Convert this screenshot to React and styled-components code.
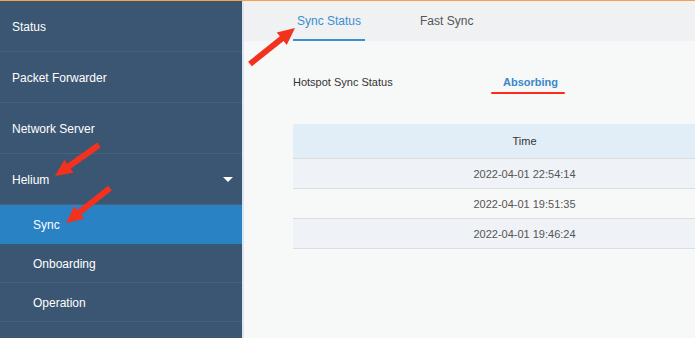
import React from "react";
import styled, { createGlobalStyle } from "styled-components";

const GlobalStyle = createGlobalStyle`
  html, body { margin: 0; padding: 0; }
  body {
    font-family: "Liberation Sans", Arial, sans-serif;
    overflow: hidden;
    background: #f7f8f8;
  }
`;

const Page = styled.div`
  position: relative;
  display: flex;
  width: 695px;
  height: 338px;
  border-top: 1px solid #f4a14c;
  box-sizing: border-box;
  overflow: hidden;
`;

const Sidebar = styled.nav`
  flex: 0 0 242px;
  background: #3b5672;
  border-right: 2px solid #dde6ee;
  display: flex;
  flex-direction: column;
`;

const NavItem = styled.div`
  height: 50px;
  border-bottom: 1px solid #47627f;
  display: flex;
  align-items: center;
  justify-content: space-between;
  padding: 1px 9px 0 12px;
  box-sizing: border-box;
  height: 51px;
  color: #ffffff;
  font-size: 12px;
`;

const SubItem = styled.div`
  height: 39px;
  box-sizing: border-box;
  border-bottom: 1px solid ${(p) => (p.$active ? "#2982c4" : "#47627f")};
  display: flex;
  align-items: center;
  padding: 1px 0 0 33px;
  color: #ffffff;
  font-size: 12px;
  background: ${(p) => (p.$active ? "#2982c4" : "transparent")};
`;

const Caret = styled.span`
  width: 0;
  height: 0;
  border-left: 5px solid transparent;
  border-right: 5px solid transparent;
  border-top: 5px solid #ffffff;
`;

const Main = styled.main`
  flex: 1;
  min-width: 0;
  background: #f7f8f8;
  overflow: hidden;
`;

const TabBar = styled.div`
  height: 40px;
  background: #f0f1f3;
  display: flex;
  padding-left: 49px;
  gap: 51px;
`;

const Tab = styled.div`
  display: flex;
  align-items: center;
  padding: 2px 4px 0;
  font-size: 12px;
  color: ${(p) => (p.$active ? "#3a8fd2" : "#555555")};
  border-bottom: 2px solid ${(p) => (p.$active ? "#3a8fd2" : "transparent")};
`;

const Content = styled.section`
  padding-left: 49px;
`;

const StatusRow = styled.div`
  margin-top: 31px;
  display: grid;
  grid-template-columns: 210px auto;
  line-height: 20px;
  font-size: 11px;
`;

const Label = styled.span`
  color: #333333;
`;

const Value = styled.span`
  justify-self: start;
  position: relative;
  font-weight: bold;
  color: #3a87c8;
  &::after {
    content: "";
    position: absolute;
    left: -12px;
    right: -7px;
    bottom: -2px;
    height: 2px;
    background: #ff2a1a;
    border-radius: 1px;
  }
`;

const Table = styled.table`
  margin-top: 32px;
  width: 926px;
  border-collapse: collapse;
  font-size: 11px;
`;

const HeadCell = styled.th`
  height: 34px;
  padding: 0;
  background: #e1eef8;
  border-bottom: 1px solid #dcdcdc;
  color: #333333;
  font-weight: normal;
  text-align: center;
  width: ${(p) => p.$w || "auto"};
  border-top-left-radius: ${(p) => (p.$first ? "3px" : "0")};
`;

const Row = styled.tr`
  background: ${(p) => (p.$odd ? "#eff2f6" : "#f7f8f8")};
`;

const Cell = styled.td`
  height: 29px;
  padding: 0;
  border-bottom: 1px solid #dddddd;
  color: #555555;
  text-align: center;
`;

const Overlay = styled.svg`
  position: absolute;
  left: 0;
  top: -1px;
  pointer-events: none;
`;

function arrowPoints([x1, y1], [x2, y2], head = 17, hw = 8, sw = 3) {
  const dx = x2 - x1;
  const dy = y2 - y1;
  const L = Math.hypot(dx, dy);
  const ux = dx / L;
  const uy = dy / L;
  const px = -uy;
  const py = ux;
  const bx = x2 - ux * head;
  const by = y2 - uy * head;
  const pts = [
    [x1 + px * sw, y1 + py * sw],
    [bx + px * sw, by + py * sw],
    [bx + px * hw, by + py * hw],
    [x2, y2],
    [bx - px * hw, by - py * hw],
    [bx - px * sw, by - py * sw],
    [x1 - px * sw, y1 - py * sw],
  ];
  return pts.map((p) => p.map((v) => v.toFixed(1)).join(",")).join(" ");
}

const arrows = [
  [[99, 145], [55, 176]],
  [[110, 188], [66, 223]],
  [[250, 64], [295, 28]],
];

const times = ["2022-04-01 22:54:14", "2022-04-01 19:51:35", "2022-04-01 19:46:24"];

export default function App() {
  return (
    <>
      <GlobalStyle />
      <Page>
        <Sidebar>
          <NavItem>Status</NavItem>
          <NavItem>Packet Forwarder</NavItem>
          <NavItem>Network Server</NavItem>
          <NavItem>
            Helium
            <Caret />
          </NavItem>
          <SubItem $active>Sync</SubItem>
          <SubItem>Onboarding</SubItem>
          <SubItem>Operation</SubItem>
        </Sidebar>
        <Main>
          <TabBar>
            <Tab $active>Sync Status</Tab>
            <Tab>Fast Sync</Tab>
          </TabBar>
          <Content>
            <StatusRow>
              <Label>Hotspot Sync Status</Label>
              <Value>Absorbing</Value>
            </StatusRow>
            <Table>
              <thead>
                <tr>
                  <HeadCell $first $w="463px">Time</HeadCell>
                  <HeadCell />
                </tr>
              </thead>
              <tbody>
                {times.map((t, i) => (
                  <Row key={t} $odd={i % 2 === 0}>
                    <Cell>{t}</Cell>
                    <Cell />
                  </Row>
                ))}
              </tbody>
            </Table>
          </Content>
        </Main>
        <Overlay width="695" height="338" viewBox="0 0 695 338">
          {arrows.map(([a, b], i) => (
            <polygon key={i} points={arrowPoints(a, b)} fill="#f2321e" />
          ))}
        </Overlay>
      </Page>
    </>
  );
}
